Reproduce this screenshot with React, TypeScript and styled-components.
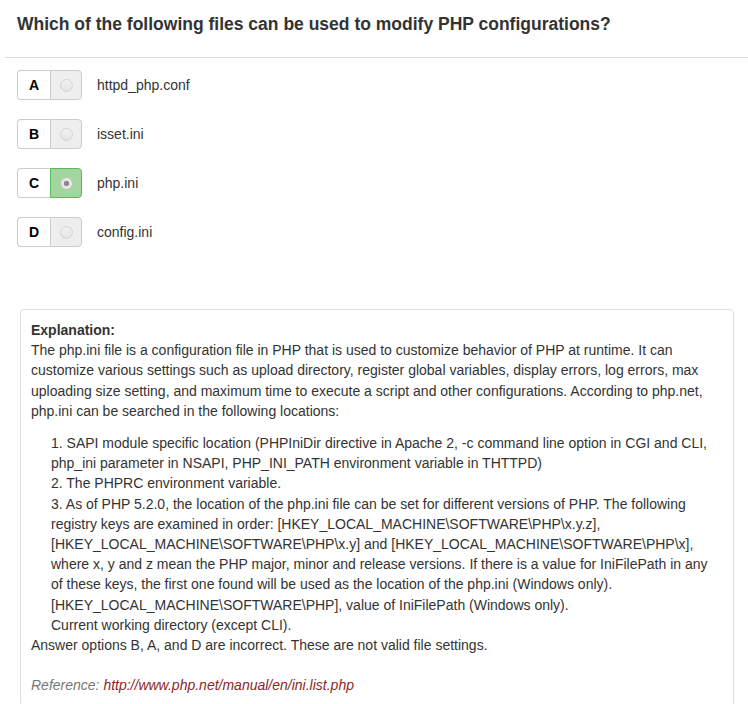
import React from 'react'
import styled, { createGlobalStyle } from 'styled-components'

const GlobalStyle = createGlobalStyle`
  body {
    margin: 0;
    background: #ffffff;
    font-family: "Liberation Sans", Arial, sans-serif;
    font-size: 14px;
    line-height: 20px;
    color: #333333;
  }
`

type Option = {
  letter: string
  text: string
  checked?: boolean
}

const options: Option[] = [
  { letter: 'A', text: 'httpd_php.conf' },
  { letter: 'B', text: 'isset.ini' },
  { letter: 'C', text: 'php.ini', checked: true },
  { letter: 'D', text: 'config.ini' },
]

export default function App() {
  return (
    <Page>
      <GlobalStyle />
      <Header>
        <Title>Which of the following files can be used to modify PHP configurations?</Title>
      </Header>
      <Options>
        {options.map((o) => (
          <OptionRow key={o.letter}>
            <Group>
              <Letter>{o.letter}</Letter>
              <RadioCell $checked={o.checked}>
                <Radio $checked={o.checked} />
              </RadioCell>
            </Group>
            <OptionText>{o.text}</OptionText>
          </OptionRow>
        ))}
      </Options>
      <Explanation>
        <strong>Explanation:</strong>
        <Para>
          The php.ini file is a configuration file in PHP that is used to customize behavior of PHP at
          runtime. It can customize various settings such as upload directory, register global
          variables, display errors, log errors, max uploading size setting, and maximum time to
          execute a script and other configurations. According to php.net, php.ini can be searched in
          the following locations:
        </Para>
        <Locations>
          <li>
            1. SAPI module specific location (PHPIniDir directive in Apache 2, -c command line option
            in CGI and CLI, php_ini parameter in NSAPI, PHP_INI_PATH environment variable in THTTPD)
          </li>
          <li>2. The PHPRC environment variable.</li>
          <li>
            3. As of PHP 5.2.0, the location of the php.ini file can be set for different versions of
            PHP. The following registry keys are examined in order:
            [HKEY_LOCAL_MACHINE\SOFTWARE\PHP\x.y.z], [HKEY_LOCAL_MACHINE\SOFTWARE\PHP\x.y] and
            [HKEY_LOCAL_MACHINE\SOFTWARE\PHP\x], where x, y and z mean the PHP major, minor and
            release versions. If there is a value for IniFilePath in any of these keys, the first one
            found will be used as the location of the php.ini (Windows only).
          </li>
          <li>[HKEY_LOCAL_MACHINE\SOFTWARE\PHP], value of IniFilePath (Windows only).</li>
          <li>Current working directory (except CLI).</li>
        </Locations>
        <Para>Answer options B, A, and D are incorrect. These are not valid file settings.</Para>
        <Reference>
          Reference: <a href="#">http://www.php.net/manual/en/ini.list.php</a>
        </Reference>
      </Explanation>
    </Page>
  )
}

const Page = styled.div`
  width: 748px;
  min-height: 704px;
`

const Header = styled.div`
  margin-left: 5px;
  padding: 13px 0 0 12px;
  height: 44px;
  border-bottom: 1px solid #dddddd;
`

const Title = styled.h1`
  margin: 0;
  font-size: 17.5px;
  line-height: 22px;
  font-weight: bold;
  color: #333333;
`

const Options = styled.div`
  display: flex;
  flex-direction: column;
  gap: 19px;
  padding: 12px 0 0 17px;
`

const OptionRow = styled.div`
  display: flex;
  align-items: center;
  gap: 15px;
`

const Group = styled.div`
  display: flex;
  height: 30px;
`

const Letter = styled.div`
  width: 32px;
  display: flex;
  align-items: center;
  justify-content: center;
  font-weight: bold;
  font-size: 14px;
  color: #000000;
  background: #ffffff;
  border: 1px solid #cccccc;
  border-right: none;
  border-radius: 4px 0 0 4px;
`

const RadioCell = styled.div<{ $checked?: boolean }>`
  width: 30px;
  display: flex;
  align-items: center;
  justify-content: center;
  background: ${(p) => (p.$checked ? '#a3d69f' : '#eeeeee')};
  border: 1px solid ${(p) => (p.$checked ? '#5cb85c' : '#cccccc')};
  border-radius: 0 4px 4px 0;
`

const Radio = styled.span<{ $checked?: boolean }>`
  box-sizing: border-box;
  width: 13px;
  height: 13px;
  border-radius: 50%;
  border: 1px solid ${(p) => (p.$checked ? '#b5c9b3' : '#d3d3d3')};
  background: ${(p) =>
    p.$checked
      ? 'radial-gradient(circle, #8a8a8a 0 2.5px, #e6e6e6 3px)'
      : 'linear-gradient(#f2f2f2, #e4e4e4)'};
`

const OptionText = styled.div`
  font-size: 14px;
  color: #333333;
`

const Explanation = styled.div`
  margin: 62px 14px 0 20px;
  padding: 10px 10px 10px 10px;
  border: 1px solid #dddddd;
  border-radius: 4px;
  line-height: 20.2px;
`

const Para = styled.div``

const Locations = styled.ul`
  list-style: none;
  margin: 12px 0 0 0;
  padding: 0 0 0 20px;
`

const Reference = styled.div`
  margin-top: 20px;
  font-style: italic;
  color: #777777;

  a {
    color: #8b1f1f;
    text-decoration: none;
  }
`
